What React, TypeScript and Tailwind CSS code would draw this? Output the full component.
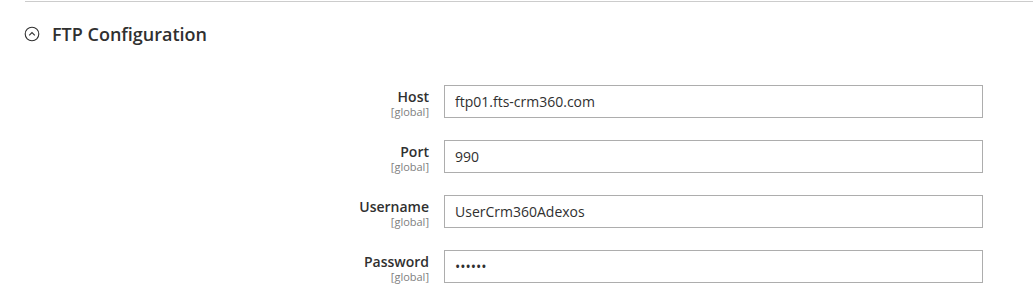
import React from 'react'

const fields = [
  { label: 'Host', value: 'ftp01.fts-crm360.com', type: 'text' },
  { label: 'Port', value: '990', type: 'text' },
  { label: 'Username', value: 'UserCrm360Adexos', type: 'text' },
  { label: 'Password', value: 'secret', type: 'password' },
]

export default function App() {
  return (
    <div className="w-[1033px] h-[296px] bg-white pl-[25px] pt-px overflow-hidden" style={{ fontFamily: '"Open Sans", sans-serif' }}>
      <div className="h-px bg-[#cccccc] w-[1008px]" />
      <div className="flex items-center h-[23px] mt-[20px]">
        <svg width="16" height="16" viewBox="0 0 16 16" className="ml-[-1px] text-[#303030]">
          <circle cx="8" cy="8" r="6.8" fill="none" stroke="currentColor" strokeWidth="1.1" />
          <path d="M5.2 9.4 L8 6.6 L10.8 9.4" fill="none" stroke="currentColor" strokeWidth="1.1" />
        </svg>
        <span className="ml-[12px] text-[18px] font-semibold text-[#303030] leading-none">FTP Configuration</span>
      </div>
      <div className="mt-[40px] flex flex-col gap-[22px]">
        {fields.map((f) => (
          <div key={f.label} className="flex items-start">
            <div className="w-[419px] pr-[15px] text-right">
              <div className="text-[14px] font-semibold text-[#303030] leading-[18px] pt-[3px]">{f.label}</div>
              <div className="text-[11px] text-[#808080] leading-[12px]">[global]</div>
            </div>
            <input
              readOnly
              type={f.type}
              value={f.value}
              className="w-[539px] h-[33px] border border-[#adadad] px-[10px] text-[14px] text-[#303030] outline-none"
            />
          </div>
        ))}
      </div>
    </div>
  )
}
